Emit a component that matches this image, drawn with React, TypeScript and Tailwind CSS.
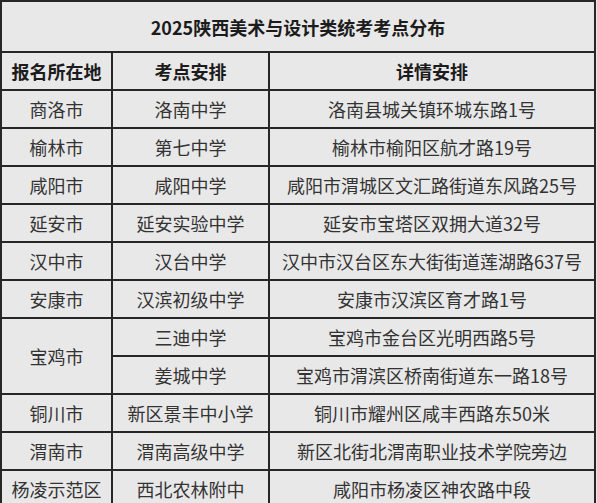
import React from "react";

type Row = { city: string; school: string; addr: string; span?: number; skipCity?: boolean };

const rows: Row[] = [
  { city: "商洛市", school: "洛南中学", addr: "洛南县城关镇环城东路1号" },
  { city: "榆林市", school: "第七中学", addr: "榆林市榆阳区航才路19号" },
  { city: "咸阳市", school: "咸阳中学", addr: "咸阳市渭城区文汇路街道东风路25号" },
  { city: "延安市", school: "延安实验中学", addr: "延安市宝塔区双拥大道32号" },
  { city: "汉中市", school: "汉台中学", addr: "汉中市汉台区东大街街道莲湖路637号" },
  { city: "安康市", school: "汉滨初级中学", addr: "安康市汉滨区育才路1号" },
  { city: "宝鸡市", school: "三迪中学", addr: "宝鸡市金台区光明西路5号", span: 2 },
  { city: "", school: "姜城中学", addr: "宝鸡市渭滨区桥南街道东一路18号", skipCity: true },
  { city: "铜川市", school: "新区景丰中小学", addr: "铜川市耀州区咸丰西路东50米" },
  { city: "渭南市", school: "渭南高级中学", addr: "新区北街北渭南职业技术学院旁边" },
  { city: "杨凌示范区", school: "西北农林附中", addr: "咸阳市杨凌区神农路中段" },
];

const cell =
  "flex items-center justify-center border-r-2 border-b-2 border-[#262626] whitespace-nowrap";

export default function App() {
  return (
    <div
      className="w-[597px] h-[503px] overflow-hidden bg-[#e8e8e8]"
      style={{ fontFamily: '"Noto Sans CJK SC", "Noto Sans", sans-serif' }}
    >
      <div className="grid grid-cols-[111px_157px_326px] grid-rows-[51px_repeat(12,38px)] w-[596px] border-l-2 border-t-2 border-[#262626] bg-[#e8e8e8] text-[18px] leading-none text-[#333]">
        <div className={`${cell} col-span-3 font-bold text-[#1c1c1c]`}>
          2025陕西美术与设计类统考考点分布
        </div>
        <div className={`${cell} font-bold text-[#1c1c1c]`}>报名所在地</div>
        <div className={`${cell} font-bold text-[#1c1c1c]`}>考点安排</div>
        <div className={`${cell} font-bold text-[#1c1c1c]`}>详情安排</div>
        {rows.map((r, i) => (
          <React.Fragment key={i}>
            {!r.skipCity && (
              <div className={`${cell} ${r.span === 2 ? "row-span-2" : ""}`}>{r.city}</div>
            )}
            <div className={cell}>{r.school}</div>
            <div className={cell}>{r.addr}</div>
          </React.Fragment>
        ))}
      </div>
    </div>
  );
}
